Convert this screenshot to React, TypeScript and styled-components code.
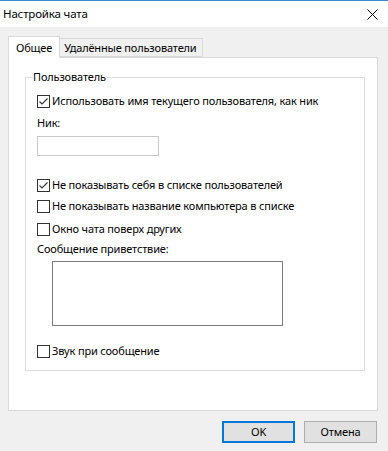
import React from 'react'
import styled, { createGlobalStyle } from 'styled-components'

const GlobalStyle = createGlobalStyle`
  html, body {
    margin: 0;
    padding: 0;
    background: #f0f0f0;
  }
  body {
    font-family: 'Noto Sans', 'Segoe UI', sans-serif;
    font-size: 11px;
    letter-spacing: -0.16px;
    color: #000;
  }
`

const Window = styled.div`
  width: 388px;
  height: 451px;
  box-sizing: border-box;
  border-top: 1px solid #3c8ad8;
  background: #f0f0f0;
  display: flex;
  flex-direction: column;
  overflow: hidden;
`

const TitleBar = styled.div`
  height: 26px;
  flex: none;
  background: #fff;
  display: flex;
  align-items: center;
  justify-content: space-between;
  padding: 0 10px 0 3px;
`

const Title = styled.span`
  font-size: 11.5px;
  line-height: 16px;
  margin-top: -1px;
`

const Body = styled.div`
  flex: 1;
  padding: 8px 10px 0 8px;
  display: flex;
  flex-direction: column;
`

const TabStrip = styled.div`
  display: flex;
  align-items: flex-end;
  height: 22px;
  position: relative;
  z-index: 1;
`

const Tab = styled.div<{ $active?: boolean }>`
  box-sizing: border-box;
  height: ${p => (p.$active ? '22px' : '19px')};
  padding: ${p => (p.$active ? '0 7px 0 7px' : '0 5px 0 4px')};
  background: ${p => (p.$active ? '#fff' : '#f0f0f0')};
  border: 1px solid #d9d9d9;
  border-bottom: ${p => (p.$active ? 'none' : '1px solid #d9d9d9')};
  border-left: ${p => (p.$active ? '1px solid #d9d9d9' : 'none')};
  display: flex;
  align-items: center;
  line-height: 16px;
  margin-bottom: ${p => (p.$active ? '-1px' : '0')};
  white-space: nowrap;
`

const Panel = styled.div`
  box-sizing: border-box;
  width: 370px;
  height: 354px;
  background: #fff;
  border: 1px solid #d9d9d9;
  padding: 19px 0 0 16px;
`

const Group = styled.fieldset`
  box-sizing: border-box;
  width: 340px;
  height: 294px;
  margin: 0;
  border: 1px solid #dcdcdc;
  padding: 9px 0 0 11px;
  display: flex;
  flex-direction: column;
  align-items: flex-start;
  position: relative;
`

const Legend = styled.span`
  position: absolute;
  top: -9px;
  left: 7px;
  padding: 0 1px 0 0;
  background: #fff;
  line-height: 16px;
`

const CheckRow = styled.label<{ $mt?: number }>`
  display: flex;
  align-items: center;
  gap: 2px;
  height: 16px;
  line-height: 16px;
  margin-top: ${p => p.$mt ?? 0}px;
  white-space: nowrap;
`

const Box = styled.span`
  box-sizing: border-box;
  width: 13px;
  height: 13px;
  border: 1px solid #333;
  background: #fff;
  display: flex;
  align-items: center;
  justify-content: center;
  flex: none;
`

const Label = styled.div<{ $mt?: number }>`
  line-height: 16px;
  margin-top: ${p => p.$mt ?? 0}px;
`

const TextInput = styled.div`
  box-sizing: border-box;
  width: 122px;
  height: 20px;
  margin-top: 5px;
  border: 1px solid #c8c8c8;
  background: #fff;
`

const TextArea = styled.div`
  box-sizing: border-box;
  width: 231px;
  height: 65px;
  margin: 4px 0 0 15px;
  border: 1px solid #7a7a7a;
  background: #fff;
`

const Footer = styled.div`
  display: flex;
  justify-content: flex-end;
  gap: 9px;
  margin-top: 10px;
  padding-right: 1px;
`

const Button = styled.div<{ $primary?: boolean }>`
  box-sizing: border-box;
  width: 73px;
  height: 22px;
  background: #e1e1e1;
  border: ${p => (p.$primary ? '2px solid #0078d7' : '1px solid #adadad')};
  display: flex;
  align-items: center;
  justify-content: center;
  line-height: 16px;
`

function Checkbox({ checked, label, mt }: { checked?: boolean; label: string; mt?: number }) {
  return (
    <CheckRow $mt={mt}>
      <Box>
        {checked && (
          <svg width="11" height="11" viewBox="0 0 11 11">
            <polyline points="1.5,5.5 4,8 9.5,2.5" fill="none" stroke="#333" strokeWidth="1.1" />
          </svg>
        )}
      </Box>
      <span>{label}</span>
    </CheckRow>
  )
}

export default function App() {
  return (
    <Window>
      <GlobalStyle />
      <TitleBar>
        <Title>Настройка чата</Title>
        <svg width="11" height="11" viewBox="0 0 11 11">
          <path d="M0.5 0.5 L10.5 10.5 M10.5 0.5 L0.5 10.5" stroke="#000" strokeWidth="1" />
        </svg>
      </TitleBar>
      <Body>
        <TabStrip>
          <Tab $active>Общее</Tab>
          <Tab>Удалённые пользователи</Tab>
        </TabStrip>
        <Panel>
          <Group>
            <Legend>Пользователь</Legend>
            <Checkbox checked mt={6} label="Использовать имя текущего пользователя, как ник" />
            <Label $mt={6}>Ник:</Label>
            <TextInput />
            <Checkbox checked mt={21} label="Не показывать себя в списке пользователей" />
            <Checkbox mt={5} label="Не показывать название компьютера в списке" />
            <Checkbox mt={7} label="Окно чата поверх других" />
            <Label $mt={4}>Сообщение приветствие:</Label>
            <TextArea />
            <Checkbox mt={17} label="Звук при сообщение" />
          </Group>
        </Panel>
        <Footer>
          <Button $primary>OK</Button>
          <Button>Отмена</Button>
        </Footer>
      </Body>
    </Window>
  )
}
